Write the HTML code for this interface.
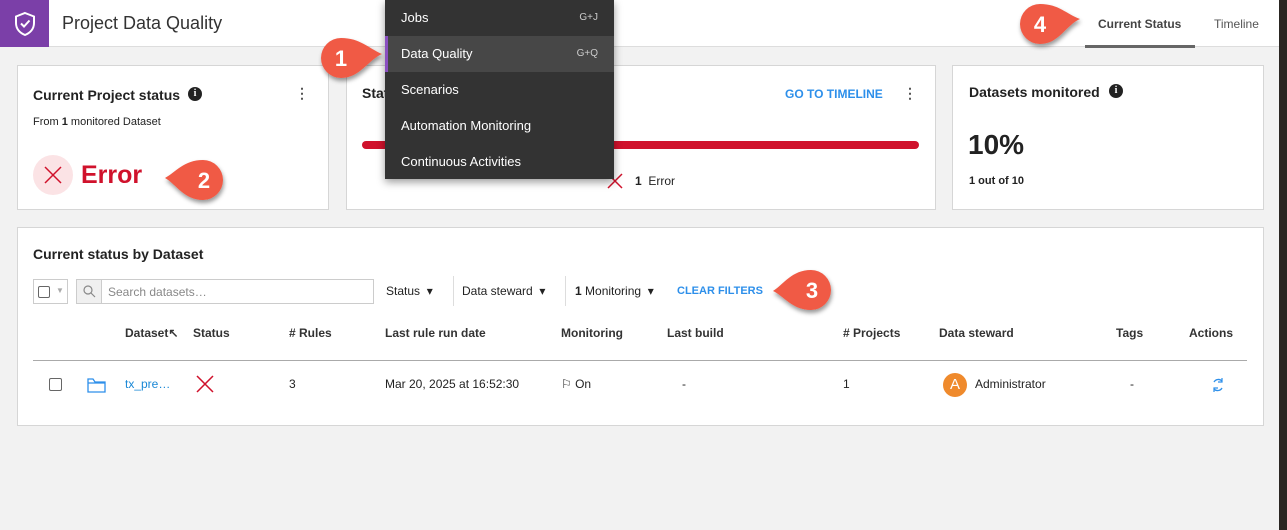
<!DOCTYPE html>
<html><head><meta charset="utf-8"><style>
*{box-sizing:border-box;margin:0;padding:0}
body{width:1287px;height:530px;overflow:hidden;background:#f2f2f2;font-family:"Liberation Sans",sans-serif;color:#222;position:relative;font-size:12px}
.a{position:absolute;white-space:nowrap}
.card{position:absolute;background:#fff;border:1px solid #d6d6d6}
.b{font-weight:bold}
.menu div.it{position:absolute;left:0;width:229px;height:36px;color:#fff;font-size:13px;padding-left:16px;line-height:36px}
.menu span.k{position:absolute;right:16px;font-size:10px;color:#ccc}
.th{position:absolute;top:326px;font-size:12px;font-weight:bold;color:#333}
</style></head><body>
<div class="a" style="left:0;top:0;width:1287px;height:47px;background:#fff;border-bottom:1px solid #ddd"></div>
<div class="a" style="left:0;top:0;width:49px;height:47px;background:#7b3fa8"></div>
<svg class="a" style="left:13px;top:11px" width="24" height="26" viewBox="0 0 24 26"><path d="M12 2 L21 5.5 V12 C21 18 17 22 12 24 C7 22 3 18 3 12 V5.5 Z" fill="none" stroke="#fff" stroke-width="2"/><path d="M8 12.5 L11 15.5 L16.5 9.5" fill="none" stroke="#fff" stroke-width="2"/></svg>
<div class="a" style="left:62px;top:13px;font-size:18px;color:#333">Project Data Quality</div>
<div class="a" style="left:1098px;top:17px;font-size:12px;font-weight:bold;color:#444">Current Status</div>
<div class="a" style="left:1085px;top:45px;width:110px;height:3px;background:#666"></div>
<div class="a" style="left:1214px;top:17px;font-size:12px;color:#555">Timeline</div>
<div class="a" style="left:1279px;top:0;width:8px;height:530px;background:#2a2622"></div>

<div class="card" style="left:17px;top:65px;width:312px;height:145px"></div>
<div class="a b" style="left:33px;top:87px;font-size:14px">Current Project status</div>
<div class="a" style="left:188px;top:87px;width:14px;height:14px;border-radius:50%;background:#222;color:#fff;font-size:10px;font-weight:bold;text-align:center;line-height:14px;font-family:'Liberation Serif',serif">i</div>
<div class="a b" style="left:295px;top:85px;font-size:14px;color:#555">⋮</div>
<div class="a" style="left:33px;top:116px;font-size:11px">From <b>1</b> monitored Dataset</div>
<div class="a" style="left:33px;top:155px;width:40px;height:40px;border-radius:50%;background:#fbe3e5"></div>
<svg class="a" style="left:44px;top:166px" width="18" height="18"><path d="M1 1L17 17M17 1L1 17" stroke="#d0122c" stroke-width="1.5"/></svg>
<div class="a b" style="left:81px;top:161px;font-size:25px;color:#d0122c">Error</div>

<div class="card" style="left:346px;top:65px;width:590px;height:145px"></div>
<div class="a b" style="left:362px;top:85px;font-size:14px">Status</div>
<div class="a b" style="left:785px;top:87px;font-size:12px;color:#2d8fea">GO TO TIMELINE</div>
<div class="a b" style="left:903px;top:85px;font-size:14px;color:#555">⋮</div>
<div class="a" style="left:362px;top:141px;width:557px;height:8px;border-radius:4px;background:#d0122c"></div>
<svg class="a" style="left:607px;top:173px" width="16" height="16"><path d="M1 1L15 15M15 1L1 15" stroke="#d0122c" stroke-width="1.5"/></svg>
<div class="a" style="left:635px;top:174px;font-size:12px"><b>1</b>&nbsp; Error</div>

<div class="card" style="left:952px;top:65px;width:312px;height:145px"></div>
<div class="a b" style="left:969px;top:84px;font-size:14px">Datasets monitored</div>
<div class="a" style="left:1109px;top:84px;width:14px;height:14px;border-radius:50%;background:#222;color:#fff;font-size:10px;font-weight:bold;text-align:center;line-height:14px;font-family:'Liberation Serif',serif">i</div>
<div class="a b" style="left:968px;top:129px;font-size:28px">10%</div>
<div class="a b" style="left:969px;top:175px;font-size:11px">1 out of 10</div>

<div class="card" style="left:17px;top:227px;width:1247px;height:199px"></div>
<div class="a b" style="left:33px;top:246px;font-size:14px">Current status by Dataset</div>
<div class="a" style="left:33px;top:279px;width:35px;height:25px;border:1px solid #ccc;background:#fff"></div>
<div class="a" style="left:38px;top:286px;width:12px;height:12px;border:1px solid #666;border-radius:2px"></div>
<div class="a" style="left:56px;top:286px;font-size:8px;color:#aaa">▼</div>
<div class="a" style="left:76px;top:279px;width:298px;height:25px;border:1px solid #ccc;background:#fff"></div>
<div class="a" style="left:76px;top:279px;width:26px;height:25px;background:#f0f0f0;border:1px solid #ccc"></div>
<svg class="a" style="left:83px;top:285px" width="13" height="13"><circle cx="5" cy="5" r="4" fill="none" stroke="#888" stroke-width="1.2"/><path d="M8 8L12 12" stroke="#888" stroke-width="1.2"/></svg>
<div class="a" style="left:108px;top:285px;font-size:12px;color:#888">Search datasets…</div>
<div class="a" style="left:386px;top:284px;font-size:12px">Status &nbsp;▾</div>
<div class="a" style="left:453px;top:276px;width:1px;height:30px;background:#ddd"></div>
<div class="a" style="left:462px;top:284px;font-size:12px">Data steward &nbsp;▾</div>
<div class="a" style="left:565px;top:276px;width:1px;height:30px;background:#ddd"></div>
<div class="a" style="left:575px;top:284px;font-size:12px"><b>1</b> Monitoring &nbsp;▾</div>
<div class="a b" style="left:677px;top:285px;font-size:11px;color:#2d8fea">CLEAR FILTERS</div>

<div class="th" style="left:125px">Dataset↖</div>
<div class="th" style="left:193px">Status</div>
<div class="th" style="left:289px"># Rules</div>
<div class="th" style="left:385px">Last rule run date</div>
<div class="th" style="left:561px">Monitoring</div>
<div class="th" style="left:667px">Last build</div>
<div class="th" style="left:843px"># Projects</div>
<div class="th" style="left:939px">Data steward</div>
<div class="th" style="left:1116px">Tags</div>
<div class="th" style="left:1189px">Actions</div>
<div class="a" style="left:33px;top:360px;width:1214px;height:1px;background:#aaa"></div>

<div class="a" style="left:49px;top:378px;width:13px;height:13px;border:1px solid #666;border-radius:2px"></div>
<svg class="a" style="left:86px;top:376px" width="21" height="18"><path d="M2 4V16H19V6H9L7 3H2Z M2 7H19" fill="none" stroke="#2d8fea" stroke-width="1.3"/></svg>
<div class="a" style="left:125px;top:377px;font-size:12px;color:#1a88d6">tx_pre…</div>
<svg class="a" style="left:196px;top:375px" width="18" height="18"><path d="M1 1L17 17M17 1L1 17" stroke="#d0122c" stroke-width="1.5"/></svg>
<div class="a" style="left:289px;top:377px;font-size:12px">3</div>
<div class="a" style="left:385px;top:377px;font-size:12px">Mar 20, 2025 at 16:52:30</div>
<div class="a" style="left:561px;top:377px;font-size:12px">⚐ On</div>
<div class="a" style="left:682px;top:377px;font-size:12px">-</div>
<div class="a" style="left:843px;top:377px;font-size:12px">1</div>
<div class="a" style="left:943px;top:373px;width:24px;height:24px;border-radius:50%;background:#ef8a2c;color:#fff;text-align:center;line-height:24px;font-size:15px">A</div>
<div class="a" style="left:975px;top:377px;font-size:12px">Administrator</div>
<div class="a" style="left:1130px;top:377px;font-size:12px">-</div>
<svg class="a" style="left:1211px;top:377px" width="14" height="16"><path d="M3 5A5 5 0 0 1 11 4M11 11A5 5 0 0 1 3 12" fill="none" stroke="#2d8fea" stroke-width="1.3"/><path d="M11 1V5H7M3 15V11H7" fill="none" stroke="#2d8fea" stroke-width="1.2"/></svg>

<div class="a menu" style="left:385px;top:0;width:229px;height:179px;background:#333;box-shadow:0 3px 8px rgba(0,0,0,.4)">
<div class="it" style="top:0">Jobs<span class="k">G+J</span></div>
<div class="it" style="top:36px;background:#474747;border-left:3px solid #8a4fc0;padding-left:13px">Data Quality<span class="k">G+Q</span></div>
<div class="it" style="top:72px">Scenarios</div>
<div class="it" style="top:108px">Automation Monitoring</div>
<div class="it" style="top:144px">Continuous Activities</div>
</div>

<svg class="a" style="left:0;top:0" width="1287" height="530">
<defs><filter id="s" x="-30%" y="-30%" width="160%" height="160%"><feDropShadow dx="1" dy="3" stdDeviation="2" flood-opacity=".4"/></filter></defs>
<g fill="#f05a45" filter="url(#s)">
<path d="M341 38 C360 38 368 48 382 54 C368 60 360 78 341 78 A20 20 0 0 1 341 38Z"/>
<path d="M203 160 C184 160 176 172 165 178 C176 184 184 200 203 200 A20 20 0 0 0 203 160Z"/>
<path d="M811 270 C792 270 784 284 773 291 C784 296 792 310 811 310 A20 20 0 0 0 811 270Z"/>
<path d="M1040 4 C1059 4 1066 14 1080 19 C1066 25 1059 44 1040 44 A20 20 0 0 1 1040 4Z"/>
</g>
<g fill="#fff" font-family="Liberation Sans,sans-serif" font-size="22" font-weight="bold" text-anchor="middle">
<text x="341" y="66">1</text><text x="204" y="188">2</text><text x="812" y="298">3</text><text x="1040" y="32">4</text>
</g>
</svg>
</body></html>
